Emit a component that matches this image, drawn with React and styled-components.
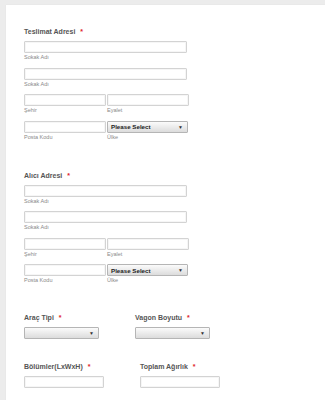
import styled, { createGlobalStyle } from 'styled-components';

const GlobalStyle = createGlobalStyle`
    html, body {
        margin: 0;
        padding: 0;
        background: #ececec;
        font-family: "Liberation Sans", Arial, sans-serif;
    }
`;

const Page = styled.div`
    padding: 5px 0 0 6px;
    min-height: 400px;
    box-sizing: border-box;
    overflow: hidden;
`;

const Card = styled.div`
    background: #ffffff;
    min-height: 395px;
    padding: 23px 0 0 18px;
    box-sizing: border-box;
    box-shadow: 0 0 1px rgba(0, 0, 0, 0.08);
`;

const Section = styled.div`
    display: flex;
    flex-direction: column;
    margin-bottom: ${(p) => p.$gap || 0}px;
`;

const Title = styled.div`
    font-size: 7px;
    line-height: 8px;
    height: 8px;
    font-weight: 700;
    color: #555;
    margin-bottom: 5px;
    white-space: nowrap;
    .req {
        color: #e0252b;
        margin-left: 5px;
    }
`;

const Field = styled.div`
    display: flex;
    flex-direction: column;
    width: ${(p) => p.$w}px;
    margin-bottom: ${(p) => (p.$last ? 0 : 6.5)}px;
`;

const Row = styled.div`
    display: flex;
    gap: 1px;
`;

const TextBox = styled.div`
    height: 12px;
    box-sizing: border-box;
    border: 1px solid #d3d3d3;
    border-radius: 1px;
    background: #fff;
    box-shadow: inset 0 0 0 1px #f6f6f6;
`;

const SelectBox = styled.div`
    height: 12px;
    box-sizing: border-box;
    border: 1px solid #b5b5b5;
    border-radius: 1px;
    background: linear-gradient(#fbfbfb, #dcdcdc);
    display: flex;
    align-items: center;
    justify-content: space-between;
    padding: 0 4px 0 3px;
    font-size: 6.2px;
    font-weight: 700;
    color: #222;
    .arrow {
        font-size: 5px;
        color: #333;
    }
`;

const Sub = styled.div`
    font-size: 5.5px;
    line-height: 8px;
    height: 8px;
    color: #8a8a8a;
    white-space: nowrap;
`;

const Columns = styled.div`
    display: flex;
`;

const Col = styled.div`
    width: ${(p) => p.$w}px;
    display: flex;
    flex-direction: column;
`;

const AddressBlock = ({ title, gap }) => (
    <Section $gap={gap}>
        <Title>
            {title}
            <span className="req">*</span>
        </Title>
        <Field $w={163}>
            <TextBox />
            <Sub>Sokak Adı</Sub>
        </Field>
        <Field $w={163}>
            <TextBox />
            <Sub>Sokak Adı</Sub>
        </Field>
        <Field $w={165}>
            <Row>
                <Col $w={82}>
                    <TextBox />
                    <Sub>Şehir</Sub>
                </Col>
                <Col $w={82}>
                    <TextBox />
                    <Sub>Eyalet</Sub>
                </Col>
            </Row>
        </Field>
        <Field $w={165} $last>
            <Row>
                <Col $w={82}>
                    <TextBox />
                    <Sub>Posta Kodu</Sub>
                </Col>
                <Col $w={81}>
                    <SelectBox>
                        Please Select<span className="arrow">▼</span>
                    </SelectBox>
                    <Sub>Ülke</Sub>
                </Col>
            </Row>
        </Field>
    </Section>
);

const App = () => {
    return (
        <>
            <GlobalStyle />
            <Page>
                <Card>
                    <AddressBlock title="Teslimat Adresi" gap={31} />
                    <AddressBlock title="Alıcı Adresi" gap={30} />
                    <Section $gap={24}>
                        <Columns>
                            <Col $w={111}>
                                <Title>
                                    Araç Tipi<span className="req">*</span>
                                </Title>
                                <Col $w={75}>
                                    <SelectBox>
                                        <span />
                                        <span className="arrow">▼</span>
                                    </SelectBox>
                                </Col>
                            </Col>
                            <Col $w={100}>
                                <Title>
                                    Vagon Boyutu<span className="req">*</span>
                                </Title>
                                <Col $w={75}>
                                    <SelectBox>
                                        <span />
                                        <span className="arrow">▼</span>
                                    </SelectBox>
                                </Col>
                            </Col>
                        </Columns>
                    </Section>
                    <Section>
                        <Columns>
                            <Col $w={116}>
                                <Title>
                                    Bölümler(LxWxH)<span className="req">*</span>
                                </Title>
                                <Col $w={80}>
                                    <TextBox />
                                </Col>
                            </Col>
                            <Col $w={100}>
                                <Title>
                                    Toplam Ağırlık<span className="req">*</span>
                                </Title>
                                <Col $w={80}>
                                    <TextBox />
                                </Col>
                            </Col>
                        </Columns>
                    </Section>
                </Card>
            </Page>
        </>
    );
};

export default App;
